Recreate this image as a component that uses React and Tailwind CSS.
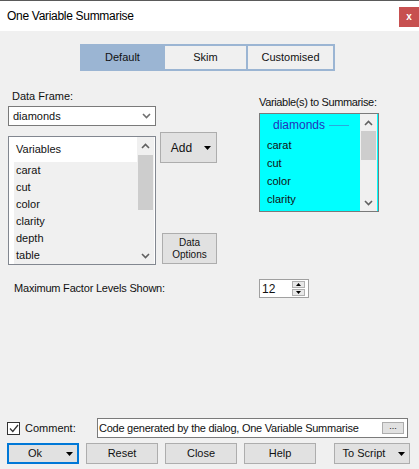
import React from "react";

function Caret({ className = "" }) {
  return (
    <svg width="7" height="4" viewBox="0 0 7 4" className={className}>
      <polygon points="0,0 7,0 3.5,4" fill="#000" />
    </svg>
  );
}

function Chevron({ up, color = "#606060" }) {
  return (
    <svg width="9" height="6" viewBox="0 0 9 6">
      <polyline
        points={up ? "1,5 4.5,1.5 8,5" : "1,1 4.5,4.5 8,1"}
        fill="none"
        stroke={color}
        strokeWidth="1.6"
      />
    </svg>
  );
}

function Scrollbar({ thumbTop, thumbHeight, arrowH }) {
  return (
    <div className="w-[17px] h-full bg-[#f0f0f0] flex flex-col">
      <div className="flex items-center justify-center" style={{ height: arrowH }}>
        <Chevron up />
      </div>
      <div className="flex-1 relative">
        <div
          className="absolute left-[1px] right-[1px] bg-[#cdcdcd]"
          style={{ top: thumbTop, height: thumbHeight }}
        />
      </div>
      <div className="flex items-center justify-center" style={{ height: arrowH }}>
        <Chevron />
      </div>
    </div>
  );
}

function Button({ children, className = "", dropdown, ok }) {
  return (
    <div
      className={
        "h-[21px] bg-[#e1e1e1] flex items-center text-[11px] text-[#111] " +
        (ok ? "border-2 border-[#0078d7] " : "border border-[#adadad] ") +
        className
      }
    >
      <span className="flex-1 text-center">{children}</span>
      {dropdown && (
        <span className="w-[16px] flex justify-center">
          <Caret />
        </span>
      )}
    </div>
  );
}

export default function App() {
  const variables = ["carat", "cut", "color", "clarity", "depth", "table"];
  const selected = ["carat", "cut", "color", "clarity"];

  return (
    <div className="w-[419px] h-[469px] bg-[#f0f0f0] border-t border-[#5a5a5a] font-['Liberation_Sans',Arial,sans-serif] text-[11px] text-[#111] overflow-hidden">
      {/* title bar */}
      <div className="h-[30px] bg-white flex items-start">
        <div className="flex-1 h-full flex items-center pl-[7px] text-[12px] tracking-[-0.3px] text-black">
          One Variable Summarise
        </div>
        <div className="mt-[6px] w-[20px] h-[20px] bg-[#c75050] flex items-center justify-center text-white text-[10px] font-bold leading-none">
          x
        </div>
      </div>

      {/* tabs */}
      <div className="mt-[13px] ml-[80px] flex w-max h-[27px] border-2 border-[#9bb5d3]">
        <div className="w-[81px] bg-[#9bb5d3] flex items-center justify-center">Default</div>
        <div className="w-[83px] border-l-2 border-[#9bb5d3] flex items-center justify-center">Skim</div>
        <div className="w-[87px] border-l-2 border-[#9bb5d3] flex items-center justify-center">Customised</div>
      </div>

      {/* main */}
      <div className="mt-[18px] flex">
        <div className="ml-[8px] w-[148px] flex flex-col">
          <div className="pl-[4px] h-[15px] leading-[15px]">Data Frame:</div>
          <div className="mt-[2px] h-[20px] bg-white border border-[#7a7a7a] flex items-center pl-[4px]">
            <span className="flex-1">diamonds</span>
            <span className="w-[18px] flex justify-center">
              <Chevron color="#707070" />
            </span>
          </div>
          <div className="mt-[10px] h-[129px] bg-white border border-[#828790] flex">
            <div className="w-[128px] flex flex-col">
              <div className="h-[25px] flex items-center pl-[7px]">Variables</div>
              {variables.map((v) => (
                <div key={v} className="h-[17px] ml-[5px] bg-[#f0f0f0] pl-[2px] flex items-center">
                  {v}
                </div>
              ))}
            </div>
            <Scrollbar thumbTop={1} thumbHeight={55} arrowH={17} />
            <div className="w-[1px]" />
          </div>
        </div>

        <div className="ml-[4px] w-[57px] flex flex-col items-end">
          <div className="mt-[43px] w-[57px] h-[31px] bg-[#e1e1e1] border border-[#adadad] flex items-center text-[12px]">
            <span className="flex-1 text-center pl-[4px]">Add</span>
            <span className="w-[18px] flex justify-center">
              <Caret />
            </span>
          </div>
          <div className="mt-[70px] w-[55px] h-[31px] bg-[#e1e1e1] border border-[#adadad] flex flex-col items-center justify-center text-[10px] leading-[12px]">
            <span>Data</span>
            <span>Options</span>
          </div>
        </div>

        <div className="ml-[42px] flex flex-col">
          <div className="mt-[6px] h-[15px] leading-[15px] tracking-[-0.35px]">Variable(s) to Summarise:</div>
          <div className="mt-[3px] w-[120px] h-[99px] bg-[#00ffff] border border-[#7a7a7a] flex">
            <div className="w-[100px] flex flex-col">
              <div className="h-[22px] flex items-center pl-[13px]">
                <span className="text-[#2233bb] text-[12px]">diamonds</span>
                <span className="ml-[4px] w-[20px] h-[1px] bg-[#2aa8dc]" />
              </div>
              {selected.map((v) => (
                <div key={v} className="h-[18px] pl-[7px] flex items-center">
                  {v}
                </div>
              ))}
            </div>
            <Scrollbar thumbTop={0} thumbHeight={29} arrowH={17} />
            <div className="w-[1px]" />
          </div>
        </div>
      </div>

      {/* max factor levels */}
      <div className="mt-[14px] flex items-center h-[19px]">
        <div className="w-[259px] pl-[14px] tracking-[-0.2px]">Maximum Factor Levels Shown:</div>
        <div className="w-[50px] h-[19px] bg-white border border-[#a0a0a0] flex items-center">
          <span className="flex-1 pl-[2px] text-[12px]">12</span>
          <div className="mr-[3px] w-[13px] flex flex-col gap-[1px]">
            <div className="h-[7px] bg-[#e8e8e8] border border-[#b0b0b0] flex items-center justify-center">
              <svg width="5" height="3" viewBox="0 0 5 3"><polygon points="0,3 5,3 2.5,0" fill="#000" /></svg>
            </div>
            <div className="h-[7px] bg-[#e8e8e8] border border-[#b0b0b0] flex items-center justify-center">
              <svg width="5" height="3" viewBox="0 0 5 3"><polygon points="0,0 5,0 2.5,3" fill="#000" /></svg>
            </div>
          </div>
        </div>
      </div>

      {/* comment */}
      <div className="mt-[120px] h-[20px] flex items-center">
        <div className="ml-[7px] w-[13px] h-[13px] bg-white border border-[#333] flex items-center justify-center">
          <svg width="10" height="9" viewBox="0 0 10 9">
            <polyline points="1,4.5 3.8,7.5 9,1" fill="none" stroke="#333" strokeWidth="1.3" />
          </svg>
        </div>
        <span className="ml-[5px] w-[72px]">Comment:</span>
        <div className="w-[311px] h-[20px] bg-white border border-[#7a7a7a] flex items-center pl-[1px]">
          <span className="flex-1 text-[11px] tracking-[-0.25px] whitespace-nowrap">
            Code generated by the dialog, One Variable Summarise
          </span>
          <div className="mr-[3px] w-[22px] h-[12px] bg-[#e1e1e1] border border-[#adadad] flex items-center justify-center text-[9px] leading-none pb-[3px]">
            ...
          </div>
        </div>
      </div>

      {/* buttons */}
      <div className="mt-[5px] flex">
        <Button ok dropdown className="ml-[7px] w-[72px]">Ok</Button>
        <Button className="ml-[7px] w-[72px]">Reset</Button>
        <Button className="ml-[7px] w-[72px]">Close</Button>
        <Button className="ml-[7px] w-[72px]">Help</Button>
        <Button dropdown className="ml-[18px] w-[76px]">To Script</Button>
      </div>
    </div>
  );
}
